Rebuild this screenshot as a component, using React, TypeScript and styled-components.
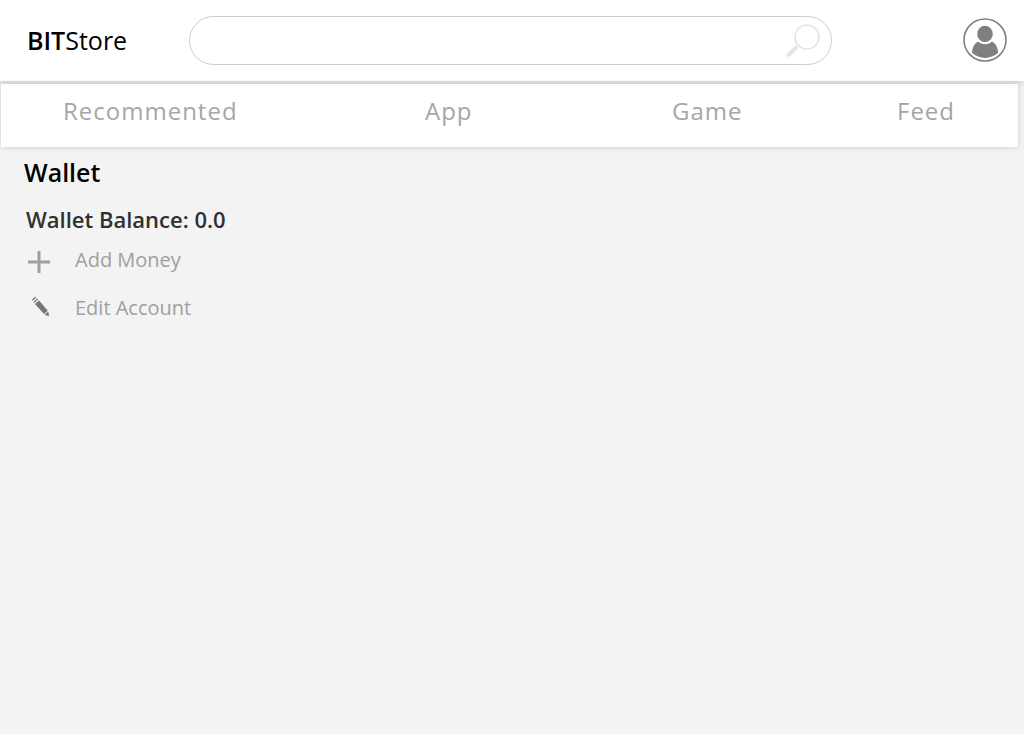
import React from "react";
import styled, { createGlobalStyle } from "styled-components";

const GlobalStyle = createGlobalStyle`
  * { box-sizing: border-box; }
  body {
    margin: 0;
    background: #f3f3f3;
    font-family: "Open Sans", "Noto Sans", sans-serif;
    color: #000;
  }
`;

const Header = styled.header`
  display: flex;
  align-items: center;
  height: 81px;
  padding: 0 17px 1px 27px;
  background: #fff;
  box-shadow: 0 3px 6px rgba(0, 0, 0, 0.1);
`;

const Brand = styled.a`
  flex: 0 0 162px;
  font-size: 25px;
  line-height: 34px;
  color: #000;
  text-decoration: none;
`;

const BrandStrong = styled.span`
  font-weight: 600;
`;

const Search = styled.form`
  display: flex;
  align-items: center;
  flex: 0 1 643px;
  height: 49px;
  padding: 0 10px 0 24px;
  border: 1px solid #cdcdcd;
  border-radius: 25px;
  background: #fff;
`;

const SearchInput = styled.input`
  flex: 1;
  min-width: 0;
  border: 0;
  outline: 0;
  background: transparent;
  font: inherit;
  font-size: 20px;
`;

const IconButton = styled.button`
  display: flex;
  padding: 0;
  border: 0;
  background: transparent;
  cursor: pointer;
`;

const ProfileButton = styled(IconButton)`
  margin-left: auto;
`;

const Nav = styled.nav`
  display: grid;
  grid-template-columns: 362fr 247fr 225fr 121fr;
  align-items: center;
  position: relative;
  height: 63px;
  margin: 3px 6px 0 1px;
  padding: 0 0 9px 62px;
  background: #fff;
  box-shadow: 0 0 6px rgba(0, 0, 0, 0.16);
`;

const NavLink = styled.a`
  justify-self: start;
  font-size: 24px;
  line-height: 34px;
  letter-spacing: 1px;
  color: #a6a6a6;
  text-decoration: none;
`;

const Main = styled.main`
  padding: 8px 24px;
`;

const Title = styled.h1`
  margin: 0;
  font-size: 25px;
  line-height: 34px;
  font-weight: 600;
`;

const Balance = styled.p`
  margin: 15px 0 12px 2px;
  font-size: 22px;
  line-height: 30px;
  font-weight: 600;
  color: #303030;
`;

const Actions = styled.div`
  display: flex;
  flex-direction: column;
  align-items: flex-start;
  gap: 20px;
  padding-left: 2px;
`;

const Action = styled.button`
  display: flex;
  align-items: center;
  gap: 23px;
  padding: 0;
  border: 0;
  background: transparent;
  font: inherit;
  font-size: 20px;
  line-height: 28px;
  color: #9f9f9f;
  cursor: pointer;
`;

const SearchIcon = () => (
  <svg width="36" height="36" viewBox="0 0 36 36" fill="none" aria-hidden="true">
    <circle cx="22" cy="15" r="12" stroke="#e4e4e4" strokeWidth="1.7" />
    <path d="M12.3 24.4 L2.5 34" stroke="#e4e4e4" strokeWidth="4" />
  </svg>
);

const ProfileIcon = () => (
  <svg width="44" height="44" viewBox="0 0 44 44" aria-hidden="true">
    <circle cx="22" cy="22" r="21" fill="#fff" stroke="#808080" strokeWidth="1.6" />
    <ellipse cx="22" cy="16" rx="7.8" ry="8.2" fill="#808080" />
    <path
      d="M15.2 23.5 C19 27.2 25 27.2 28.8 23.5 C32.5 25 34.8 29.5 35.2 34.8 C27.5 41.6 16.5 41.6 9 34.8 C9.3 29.5 11.5 25 15.2 23.5 Z"
      fill="#808080"
    />
  </svg>
);

const PlusIcon = () => (
  <svg width="26" height="28" viewBox="0 0 26 28" aria-hidden="true">
    <path d="M2 16 H24 M13 5 V27" stroke="#9f9f9f" strokeWidth="3" />
  </svg>
);

const PencilIcon = () => (
  <svg width="26" height="28" viewBox="0 0 26 28" fill="#757575" aria-hidden="true">
    <path d="M6 5.5 L9.3 2.7 L10.4 3.6 L6.8 6.7 Z" />
    <path d="M7.4 8 L11.3 4.6 L12.1 5.4 L8.1 8.9 Z" />
    <path d="M9 10 L13 6.5 L21.8 16.8 L18 20.1 Z" />
    <path d="M18.6 20.8 L22.4 17.5 L23 22.2 Z" />
  </svg>
);

const links = ["Recommented", "App", "Game", "Feed"];

export default function App() {
  return (
    <>
      <GlobalStyle />
      <Header>
        <Brand href="#home">
          <BrandStrong>BIT</BrandStrong>Store
        </Brand>
        <Search role="search" onSubmit={(e: React.FormEvent) => e.preventDefault()}>
          <SearchInput type="search" aria-label="Search" />
          <IconButton type="submit" aria-label="Search">
            <SearchIcon />
          </IconButton>
        </Search>
        <ProfileButton type="button" aria-label="Profile">
          <ProfileIcon />
        </ProfileButton>
      </Header>
      <Nav>
        {links.map((label) => (
          <NavLink key={label} href={`#${label.toLowerCase()}`}>
            {label}
          </NavLink>
        ))}
      </Nav>
      <Main>
        <Title>Wallet</Title>
        <Balance>Wallet Balance: 0.0</Balance>
        <Actions>
          <Action type="button">
            <PlusIcon />
            Add Money
          </Action>
          <Action type="button">
            <PencilIcon />
            Edit Account
          </Action>
        </Actions>
      </Main>
    </>
  );
}
